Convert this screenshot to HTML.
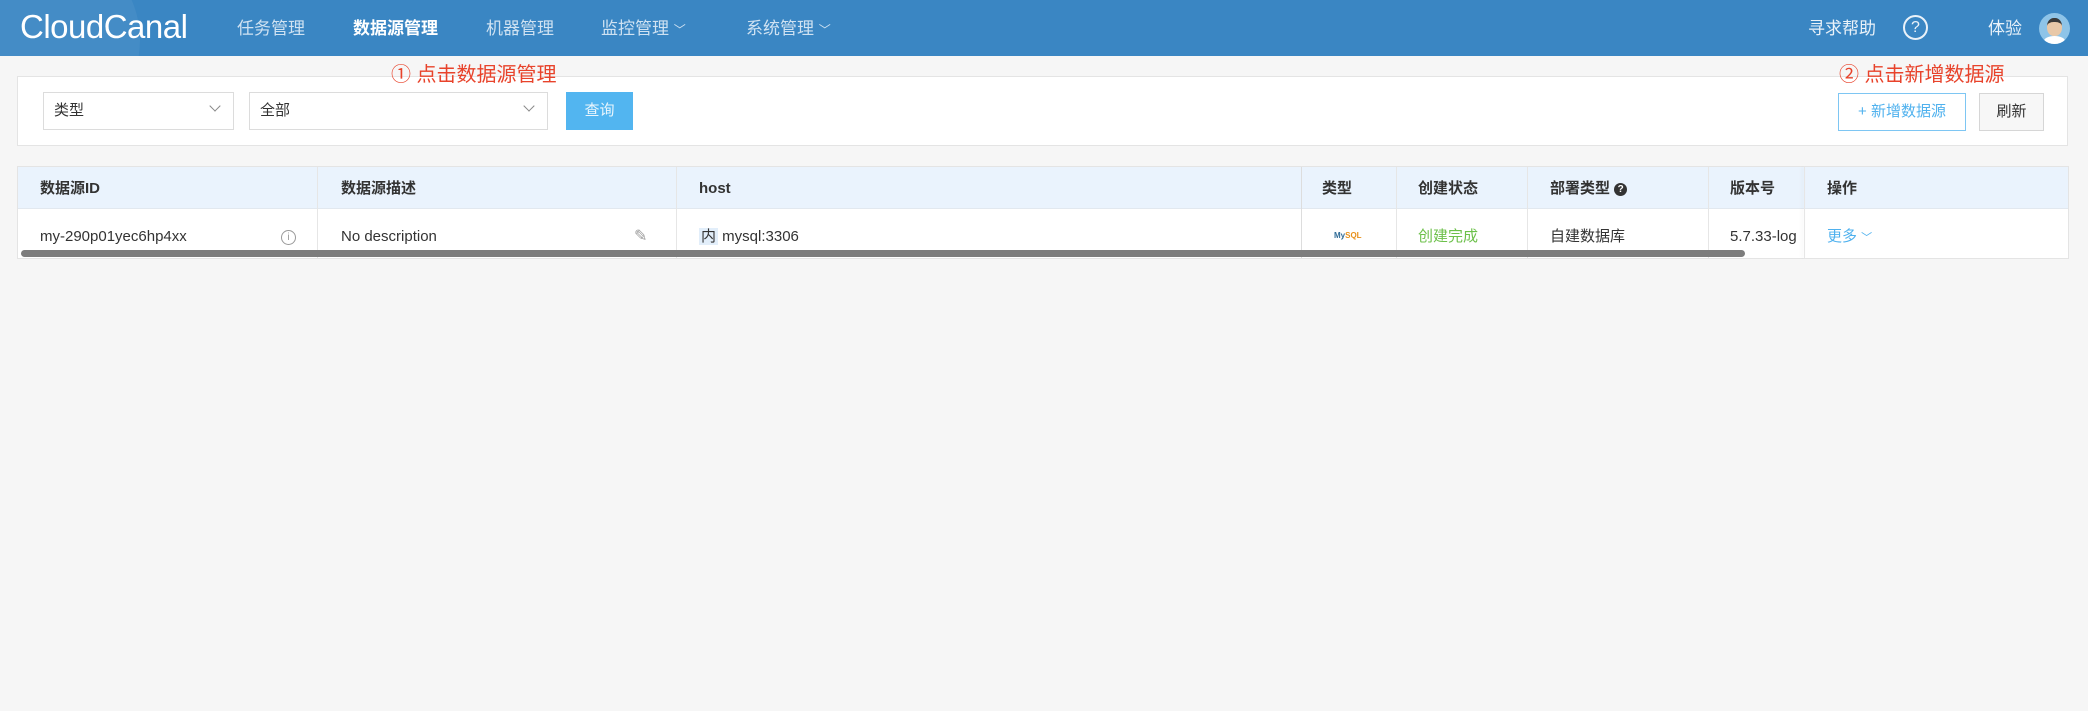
<!DOCTYPE html>
<html><head><meta charset="utf-8"><style>
*{margin:0;padding:0;box-sizing:border-box}
body{width:2088px;height:711px;background:#f6f6f6;font-family:"Liberation Sans","Noto Sans CJK SC",sans-serif;position:relative;overflow:hidden;color:#333}
.a{position:absolute;white-space:nowrap}
#hd{position:absolute;left:0;top:0;width:2088px;height:56px;background:#3a86c3;overflow:hidden}
.nav{position:absolute;top:17px;font-size:17px;line-height:24px;color:#cfe2f2}
.red{color:#e8432b;font-size:20px;line-height:26px;z-index:5}
.box{position:absolute;background:#fff;border:1px solid #e4e4e4}
.sel{position:absolute;background:#fff;border:1px solid #dcdcdc;font-size:15px;padding-left:10px;line-height:36px}
.chev{position:absolute;top:9px;width:8px;height:8px;border-right:1.3px solid #888;border-bottom:1.3px solid #888;transform:rotate(45deg)}
.th{position:absolute;top:179px;font-size:15px;line-height:20px;font-weight:bold;color:#333}
.td{position:absolute;top:227px;font-size:15px;line-height:20px;color:#333}
.vl{position:absolute;top:167px;width:1px;height:91px;background:#e6e6e6}
</style></head><body>
<div id="hd">
<div style="position:absolute;left:-60px;top:-60px;width:200px;height:200px;border-radius:50%;background:rgba(255,255,255,0.05)"></div>
<div class="a" style="left:20px;top:8px;font-size:33px;line-height:38px;color:#fff;letter-spacing:-0.5px">CloudCanal</div>
<div class="nav" style="left:237px">任务管理</div>
<div class="nav" style="left:353px;color:#fff;font-weight:bold">数据源管理</div>
<div class="nav" style="left:486px">机器管理</div>
<div class="nav" style="left:601px">监控管理 <span style="font-size:12px">﹀</span></div>
<div class="nav" style="left:746px">系统管理 <span style="font-size:12px">﹀</span></div>
<div class="nav" style="left:1808px;color:#eaf2f9">寻求帮助</div>
<div class="a" style="left:1903px;top:15px;width:25px;height:25px;border:2px solid #eaf2f9;border-radius:50%;color:#eaf2f9;font-size:16px;text-align:center;line-height:21px">?</div>
<div class="nav" style="left:1988px;color:#eaf2f9">体验</div>
<div class="a" style="left:2039px;top:13px;width:31px;height:31px;border-radius:50%;background:#8ec4e8;overflow:hidden">
<div style="position:absolute;left:8px;top:5px;width:15px;height:18px;border-radius:45%;background:#e8c8a8;border-top:4px solid #3a3a3a"></div>
<div style="position:absolute;left:5px;top:23px;width:21px;height:10px;border-radius:50% 50% 0 0;background:#fff"></div></div>
</div>

<div class="box" style="left:17px;top:76px;width:2051px;height:70px"></div>
<div class="sel" style="left:43px;top:92px;width:191px;height:38px">类型<span class="chev" style="right:14px"></span></div>
<div class="sel" style="left:249px;top:92px;width:299px;height:38px">全部<span class="chev" style="right:14px"></span></div>
<div class="a" style="left:566px;top:92px;width:67px;height:38px;background:#52b5f0;color:#eaf6fd;font-size:15px;text-align:center;line-height:38px">查询</div>
<div class="a" style="left:1838px;top:93px;width:128px;height:38px;border:1.5px solid #7ec6f3;background:#fff;color:#4fb1ee;font-size:15px;text-align:center;line-height:35px">+ 新增数据源</div>
<div class="a" style="left:1979px;top:93px;width:65px;height:38px;border:1px solid #d6d6d6;background:#f7f7f7;color:#333;font-size:15px;text-align:center;line-height:36px">刷新</div>

<div class="a red" style="left:391px;top:62px">① 点击数据源管理</div>
<div class="a red" style="left:1839px;top:62px">② 点击新增数据源</div>

<div class="box" style="left:17px;top:166px;width:2052px;height:93px"></div>
<div class="a" style="left:18px;top:167px;width:2050px;height:42px;background:#eaf3fd;border-bottom:1px solid #e2e8ef"></div>
<div class="vl" style="left:317px"></div><div class="vl" style="left:676px"></div><div class="vl" style="left:1301px;background:#ddd"></div><div class="vl" style="left:1396px"></div><div class="vl" style="left:1527px"></div><div class="vl" style="left:1708px"></div><div class="vl" style="left:1804px;box-shadow:-2px 0 3px rgba(0,0,0,0.08)"></div>
<div class="th" style="left:40px">数据源ID</div>
<div class="th" style="left:341px">数据源描述</div>
<div class="th" style="left:699px">host</div>
<div class="th" style="left:1322px">类型</div>
<div class="th" style="left:1418px">创建状态</div>
<div class="th" style="left:1550px">部署类型 <span style="display:inline-block;width:13px;height:13px;border-radius:50%;background:#333;color:#fff;font-size:10px;text-align:center;line-height:13px;vertical-align:1px">?</span></div>
<div class="th" style="left:1730px">版本号</div>
<div class="th" style="left:1827px">操作</div>
<div class="td" style="left:40px">my-290p01yec6hp4xx</div>
<div class="a" style="left:281px;top:230px;width:15px;height:15px;border:1px solid #999;border-radius:50%;font-size:10px;color:#999;text-align:center;line-height:13px">i</div>
<div class="td" style="left:341px">No description</div>
<div class="a" style="left:634px;top:227px;font-size:16px;line-height:20px;color:#999">✎</div>
<div class="td" style="left:699px"><span style="background:#e2eefa;padding:0 2px">内</span> mysql:3306</div>
<div class="a" style="left:1334px;top:231px;font-size:8px;font-weight:bold;color:#2e6a96">My<span style="color:#e8901a">SQL</span></div>
<div class="td" style="left:1418px;color:#6cc04a">创建完成</div>
<div class="td" style="left:1550px">自建数据库</div>
<div class="td" style="left:1730px">5.7.33-log</div>
<div class="td" style="left:1827px;color:#4fb1ee">更多 <span style="font-size:11px">﹀</span></div>
<div class="a" style="left:21px;top:250px;width:1724px;height:7px;border-radius:4px;background:#7d7d7d"></div>
</body></html>
